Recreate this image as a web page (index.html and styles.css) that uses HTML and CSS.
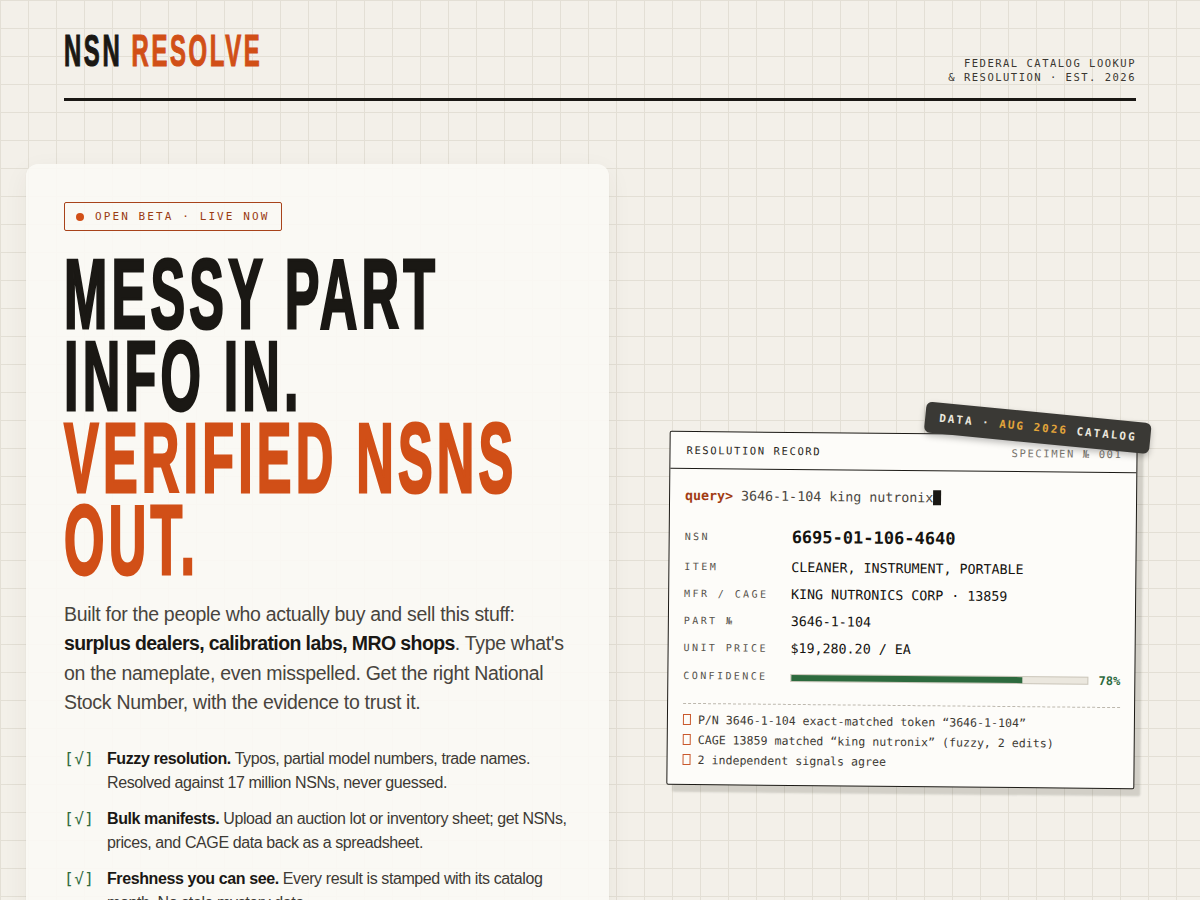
FILE: index.html
```html
<!DOCTYPE html>
<html lang="en">
<head>
<meta charset="utf-8">
<title>NSN Resolve</title>
<link rel="stylesheet" href="styles.css">
</head>
<body>
<header class="masthead">
  <div class="logo"><span class="logo-inner">NSN <em>RESOLVE</em></span></div>
  <div class="tagline">FEDERAL CATALOG LOOKUP<br>&amp; RESOLUTION · EST. 2026</div>
</header>
<main class="hero">
  <section class="pitch">
    <div class="beta"><span class="dot"></span>OPEN BETA · LIVE NOW</div>
    <h1 class="headline">
      <span class="l">MESSY PART</span>
      <span class="l">INFO IN.</span>
      <span class="l hot">VERIFIED NSNS</span>
      <span class="l hot">OUT.</span>
    </h1>
    <p class="lede">Built for the people who actually buy and sell this stuff: <b>surplus dealers, calibration labs, MRO shops</b>. Type what's on the nameplate, even misspelled. Get the right National Stock Number, with the evidence to trust it.</p>
    <ul class="features">
      <li><span class="chk">[√]</span><span class="ft"><b>Fuzzy resolution.</b> Typos, partial model numbers, trade names. Resolved against 17 million NSNs, never guessed.</span></li>
      <li><span class="chk">[√]</span><span class="ft"><b>Bulk manifests.</b> Upload an auction lot or inventory sheet; get NSNs, prices, and CAGE data back as a spreadsheet.</span></li>
      <li><span class="chk">[√]</span><span class="ft"><b>Freshness you can see.</b> Every result is stamped with its catalog month. No stale mystery data.</span></li>
    </ul>
  </section>
  <aside class="demo">
    <div class="record">
      <div class="stamp">DATA · <span class="gold">AUG 2026</span> CATALOG</div>
      <div class="rec-head"><span>RESOLUTION RECORD</span><span class="spec">SPECIMEN № 001</span></div>
      <div class="rec-body">
        <div class="query"><b>query&gt;</b>&nbsp;3646-1-104 king nutronix<span class="cursor"></span></div>
        <div class="rows">
          <span class="k">NSN</span><span class="v nsn">6695-01-106-4640</span>
          <span class="k">ITEM</span><span class="v">CLEANER, INSTRUMENT, PORTABLE</span>
          <span class="k">MFR / CAGE</span><span class="v">KING NUTRONICS CORP · 13859</span>
          <span class="k">PART №</span><span class="v">3646-1-104</span>
          <span class="k">UNIT PRICE</span><span class="v">$19,280.20 / EA</span>
          <span class="k">CONFIDENCE</span>
          <span class="v conf"><span class="bar"><span class="fill"></span></span><span class="pct">78%</span></span>
        </div>
        <ul class="evidence">
          <li><span class="sq"></span>P/N 3646-1-104 exact-matched token “3646-1-104”</li>
          <li><span class="sq"></span>CAGE 13859 matched “king nutronix” (fuzzy, 2 edits)</li>
          <li><span class="sq"></span>2 independent signals agree</li>
        </ul>
      </div>
    </div>
  </aside>
</main>
</body>
</html>
```

FILE: styles.css
```css
html, body {
  margin: 0;
  height: 900px;
  overflow: hidden;
}
body {
  background-color: #f3f0e9;
  background-image:
    linear-gradient(to bottom, #e3dfd5 1px, transparent 1px),
    linear-gradient(to right, #e3dfd5 1px, transparent 1px);
  background-size: 28px 28px;
  font-family: "Liberation Sans", Arial, sans-serif;
  color: #1a1814;
}

/* ---------- masthead ---------- */
.masthead {
  margin: 0 64px;
  padding: 26px 0 14px;
  border-bottom: 3px solid #1a1814;
  display: flex;
  justify-content: space-between;
  align-items: flex-end;
}
.logo {
  height: 50px;
  margin-bottom: 8px;
  font-size: 45px;
  line-height: 50px;
  font-weight: 700;
}
.logo-inner {
  display: inline-block;
  transform: scaleX(0.53);
  transform-origin: left center;
  letter-spacing: 5px;
  white-space: nowrap;
  -webkit-text-stroke: 1.2px currentColor;
}
.logo em {
  font-style: normal;
  color: #d14f17;
}
.tagline {
  font-family: "DejaVu Sans Mono", "Liberation Mono", monospace;
  font-size: 10.5px;
  line-height: 14px;
  letter-spacing: 1.5px;
  text-align: right;
  color: #3a3731;
}

/* ---------- hero ---------- */
.hero {
  display: grid;
  grid-template-columns: 583px 468px;
  column-gap: 59px;
  padding-left: 26px;
  margin-top: 63px;
  align-items: start;
}
.pitch {
  background: rgba(251, 249, 245, 0.9);
  border-radius: 12px;
  padding: 38px 38px 60px;
  box-shadow: 0 1px 2px rgba(60, 50, 30, 0.05), 0 8px 26px rgba(60, 50, 30, 0.06);
}
.beta {
  display: inline-flex;
  align-items: center;
  gap: 11px;
  height: 29px;
  box-sizing: border-box;
  padding: 0 12px 0 11px;
  border: 1px solid #a8431a;
  border-radius: 2px;
  font-family: "DejaVu Sans Mono", "Liberation Mono", monospace;
  font-size: 11px;
  letter-spacing: 2.1px;
  color: #9a3c14;
}
.dot {
  width: 8px;
  height: 8px;
  border-radius: 50%;
  background: #d14f17;
}
.headline {
  margin: 22px 0 0;
  font-size: 98px;
  line-height: 82px;
  font-weight: 700;
  letter-spacing: 8px;
  transform: scaleX(0.53);
  transform-origin: left top;
  white-space: nowrap;
  -webkit-text-stroke: 3px currentColor;
  color: #1a1814;
}
.headline .l { display: block; }
.headline .hot { color: #d14f17; }

.lede {
  margin: 19px 0 0;
  font-size: 19.5px;
  line-height: 29.3px;
  letter-spacing: -0.3px;
  color: #48443d;
}
.lede b {
  color: #1a1814;
  letter-spacing: -0.6px;
}

.features {
  list-style: none;
  margin: 30px 0 0;
  padding: 0;
}
.features li {
  display: grid;
  grid-template-columns: 30px 1fr;
  column-gap: 13px;
  margin-bottom: 12px;
}
.ft {
  font-size: 16px;
  line-height: 24px;
  letter-spacing: -0.4px;
  color: #3d3a34;
}
.ft b { color: #1a1814; }
.chk {
  font-family: "DejaVu Sans Mono", "Liberation Mono", monospace;
  font-size: 16px;
  line-height: 24px;
  color: #2d6a3e;
  letter-spacing: 0.5px;
}

/* ---------- record card ---------- */
.demo { margin-top: 269px; }
.record {
  position: relative;
  background: #fdfcf9;
  border: 1.5px solid #1c1a16;
  border-radius: 2px;
  box-shadow: 6px 7px 2px rgba(50, 45, 35, 0.17);
  transform: rotate(0.55deg);
  font-family: "DejaVu Sans Mono", "Liberation Mono", monospace;
}
.stamp {
  position: absolute;
  top: -23px;
  right: -14px;
  transform: rotate(5deg);
  background: #3a3935;
  color: #ebe7de;
  font-size: 11px;
  font-weight: 700;
  letter-spacing: 2px;
  padding: 0 14px;
  height: 31px;
  line-height: 31px;
  border-radius: 6px;
  box-shadow: 0 3px 6px rgba(0, 0, 0, 0.25);
  white-space: nowrap;
}
.stamp .gold { color: #e3a53a; }
.rec-head {
  display: flex;
  justify-content: space-between;
  align-items: center;
  height: 36px;
  padding: 0 14px 0 16px;
  border-bottom: 1.5px solid #1c1a16;
  font-size: 10.5px;
  letter-spacing: 1.6px;
  color: #2a2722;
}
.rec-head .spec { color: #7a766e; }
.rec-body { padding: 14px 14px 14px 15px; }
.query {
  height: 24px;
  display: flex;
  align-items: center;
  font-size: 13.3px;
  color: #4a463f;
  white-space: pre;
}
.query b { color: #a23c14; }
.cursor {
  display: inline-block;
  width: 8px;
  height: 15px;
  background: #1a1814;
}
.rows {
  margin-top: 12.5px;
  display: grid;
  grid-template-columns: 107px 1fr;
  grid-template-rows: 33px 27px 27px 27px 27px 29px;
  align-items: center;
}
.k {
  font-size: 10px;
  letter-spacing: 2.4px;
  color: #57534c;
}
.v {
  font-size: 13.3px;
  color: #151310;
}
.v.nsn {
  font-size: 17px;
  font-weight: 700;
}
.conf {
  display: flex;
  align-items: center;
  gap: 10px;
  padding-top: 4px;
}
.bar {
  flex: 1;
  height: 6px;
  background: #ebe7de;
  border: 1px solid #cdc8bd;
}
.fill {
  display: block;
  width: 78%;
  height: 100%;
  background: #2d6a3e;
}
.pct {
  font-size: 12px;
  font-weight: 700;
  color: #2d6a3e;
}
.evidence {
  list-style: none;
  margin: 13px 0 0;
  padding: 6px 0 0;
  border-top: 1px dashed #bdb8ae;
}
.evidence li {
  display: flex;
  align-items: center;
  gap: 7px;
  font-size: 11.6px;
  line-height: 20px;
  color: #3d3a34;
}
.sq {
  width: 6px;
  height: 9px;
  border: 1px solid #c9582c;
}
```
